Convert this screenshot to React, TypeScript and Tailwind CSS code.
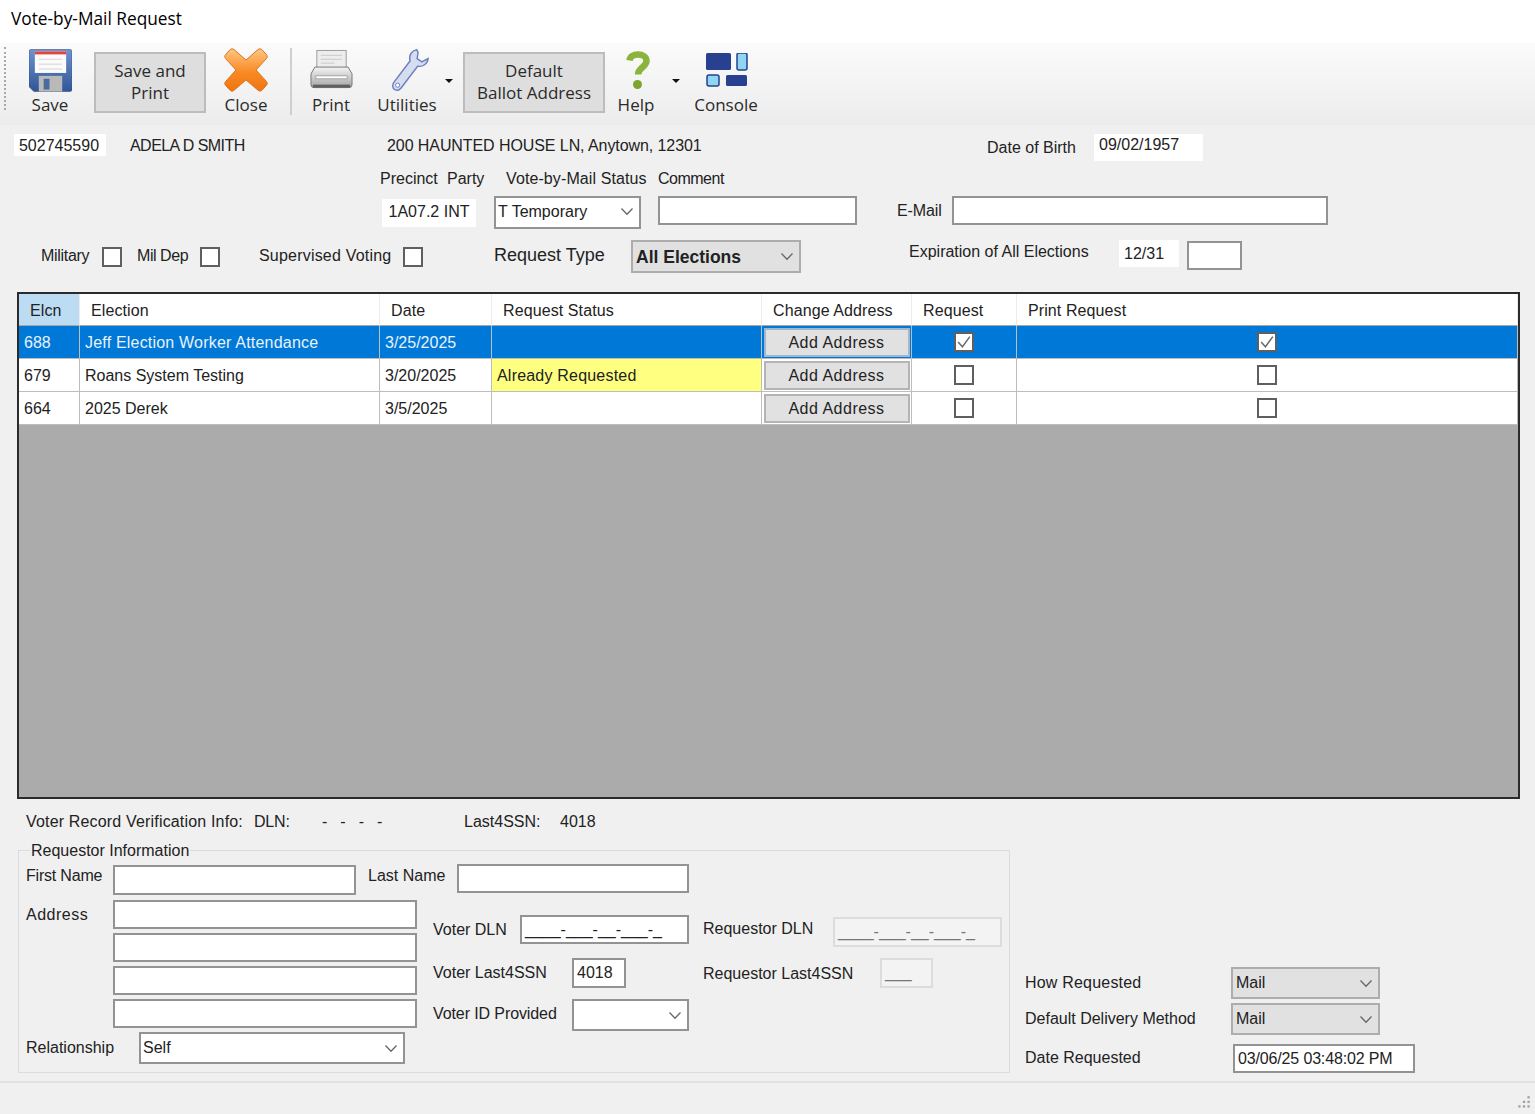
import React from "react";

const ui = "font-['Liberation_Sans',Arial,sans-serif] text-[16px] leading-[18px] text-[#222]";
const seg = "font-['Open_Sans','Noto_Sans',sans-serif] text-[17px] leading-[22px] text-[#2a2a2a]";

function Chevron({ color = "#666" }: { color?: string }) {
  return (
    <svg width="14" height="9" viewBox="0 0 14 9" fill="none">
      <path d="M1.5 1.5 7 7.2l5.5-5.7" stroke={color} strokeWidth="1.3" />
    </svg>
  );
}

function Input({ className = "", value = "", muted = false }: { className?: string; value?: string; muted?: boolean }) {
  return (
    <div className={`flex shrink-0 items-center overflow-hidden whitespace-nowrap border-2 px-[3px] ${muted ? "border-[#dcdcdc] bg-[#f3f3f3] text-[#777]" : "border-[#939393] bg-white"} ${className}`}>
      {value}
    </div>
  );
}

function Select({ className = "", value = "", gray = false, bold = false }: { className?: string; value?: string; gray?: boolean; bold?: boolean }) {
  return (
    <div className={`flex shrink-0 items-center justify-between border-2 pr-[5px] ${gray ? "border-[#adadad] bg-[#e1e1e1] pl-[3px]" : "border-[#939393] bg-white pl-[2px]"} ${bold ? "text-[17.5px] font-bold" : ""} ${className}`}>
      <span>{value}</span>
      <Chevron />
    </div>
  );
}

function Check({ checked = false, className = "" }: { checked?: boolean; className?: string }) {
  return (
    <div className={`flex h-[20px] w-[20px] shrink-0 items-center justify-center border-2 border-[#5f5f5f] bg-white ${className}`}>
      {checked && (
        <svg width="16" height="16" viewBox="0 0 15 15" fill="none">
          <path d="M2 7.5 6 12 13 2.5" stroke="#6a6a6a" strokeWidth="1.4" />
        </svg>
      )}
    </div>
  );
}

function Floppy() {
  return (
    <svg width="43" height="43" viewBox="0 0 44 43">
      <defs>
        <linearGradient id="fl" x1="0" y1="0" x2="0" y2="1">
          <stop offset="0" stopColor="#6f93cf" />
          <stop offset="1" stopColor="#2f5597" />
        </linearGradient>
      </defs>
      <path d="M2 0h40a2 2 0 0 1 2 2v39a2 2 0 0 1-2 2H5l-5-5V2a2 2 0 0 1 2-2z" fill="url(#fl)" stroke="#37527f" strokeWidth=".6" />
      <rect x="6" y="2" width="32" height="22" fill="#fbfbfb" />
      <rect x="6" y="2" width="32" height="3" fill="#e2463a" />
      <path d="M10 10h24M10 15h24M10 20h24" stroke="#d3d3d3" />
      <rect x="10" y="27" width="24" height="16" fill="#b9b9b9" />
      <rect x="15" y="30" width="6" height="11" fill="#4d6a9c" />
    </svg>
  );
}

function CloseX() {
  return (
    <svg width="44" height="44" viewBox="0 0 44 44">
      <defs>
        <linearGradient id="cx" x1="0" y1="0" x2="0" y2="1">
          <stop offset="0" stopColor="#ffc682" />
          <stop offset=".55" stopColor="#f98a24" />
          <stop offset="1" stopColor="#ee7412" />
        </linearGradient>
      </defs>
      <path d="M10 1.5 22 12 34 1.5c1.500-1 3-.8 4 .2l4.500 5c1 1.200 1 2.800 0 3.800L32 22l10.500 11.500c1 1.100 1 2.600 0 3.700l-4.500 5c-1 1-2.600 1.200-3.800.2L22 32 9.800 42.500c-1.200 1-2.800.8-3.800-.2l-4.500-5c-1-1.100-1-2.600 0-3.700L12 22 1.500 10.500c-1-1-1-2.700 0-3.800l4.500-5c1-1 2.700-1.200 4-.2z" fill="url(#cx)" stroke="#d9781f" strokeWidth="1" />
    </svg>
  );
}

function Printer() {
  return (
    <svg width="43" height="42" viewBox="0 0 44 42">
      <defs>
        <linearGradient id="pr" x1="0" y1="0" x2="0" y2="1">
          <stop offset="0" stopColor="#f4f4f4" />
          <stop offset="1" stopColor="#a4a4a4" />
        </linearGradient>
      </defs>
      <rect x="7" y="1" width="30" height="22" fill="#ededed" stroke="#9a9a9a" />
      <path d="M11 6h22M11 10h22M11 14h14" stroke="#c9c9c9" />
      <path d="M5 18h34l4 7v11a3 3 0 0 1-3 3H4a3 3 0 0 1-3-3V25z" fill="url(#pr)" stroke="#777" />
      <rect x="6" y="27" width="32" height="3" fill="#fff" stroke="#8d8d8d" strokeWidth=".7" />
      <rect x="3" y="36" width="38" height="3" fill="#5f5f5f" />
    </svg>
  );
}

function Wrench() {
  return (
    <svg width="38" height="46" viewBox="0 0 40 46">
      <path d="M27 1.500c-5 1-8.500 6-7 12L3 36c-2 3-1.500 6 .8 7.500 2.400 1.500 5 .8 6.800-1.500l17.400-23c5.500 1 10.500-2.500 11-8l-6.500 3.500-5-3.500 1-6.500c-.3-.5-.8-1.500-1.500-3z" fill="#d5ddf0" stroke="#6d7fbe" strokeWidth="1.500" />
      <circle cx="7" cy="39" r="2.200" fill="#fff" stroke="#6d7fbe" />
    </svg>
  );
}

function HelpMark() {
  return (
    <svg width="24" height="38" viewBox="0 0 24 38" fill="none">
      <path d="M3.500 9.500C4 5.500 7.500 3.500 12 3.500c5 0 8.500 2.700 8.500 6.500 0 6-8.500 6.500-8.500 13.500" stroke="#8ab43c" strokeWidth="6.500" />
      <circle cx="11.500" cy="33.500" r="4.500" fill="#7ba52f" />
    </svg>
  );
}

function ConsoleIcon() {
  return (
    <svg width="42" height="34" viewBox="0 0 42 34">
      <rect x="0" y="0" width="25" height="17" rx="1.500" fill="#27408f" />
      <rect x="31" y="0" width="10" height="17" rx="2" fill="#8fd6f2" stroke="#27408f" strokeWidth="1.500" />
      <rect x="1" y="22" width="12" height="11" rx="2" fill="#8fd6f2" stroke="#27408f" strokeWidth="1.500" />
      <rect x="20" y="22" width="21" height="11" rx="1.500" fill="#27408f" />
    </svg>
  );
}

function Tool({ label, icon, className = "" }: { label: string; icon: React.ReactNode; className?: string }) {
  return (
    <div className={`mt-[3px] flex shrink-0 flex-col items-center ${className}`}>
      <div className="flex h-[48px] items-center justify-center">{icon}</div>
      <div className={`${seg} h-[22px] whitespace-nowrap`}>{label}</div>
    </div>
  );
}

function TextButton({ lines, className = "" }: { lines: string[]; className?: string }) {
  return (
    <div className={`${seg} mt-[9px] flex h-[61px] shrink-0 flex-col items-center justify-center border-2 border-[#bcbcbc] bg-[#dedede] pb-[2px] ${className}`}>
      {lines.map((l) => (
        <div key={l}>{l}</div>
      ))}
    </div>
  );
}

function Caret({ className = "" }: { className?: string }) {
  return <div className={`h-0 w-0 shrink-0 border-x-[4px] border-t-[4px] border-x-transparent border-t-[#111] ${className}`} />;
}

const cell = "flex items-center overflow-hidden whitespace-nowrap border-r border-b border-[#bdbdbd]";

const elections = [
  { id: "688", name: "Jeff Election Worker Attendance", date: "3/25/2025", status: "", on: true },
  { id: "679", name: "Roans System Testing", date: "3/20/2025", status: "Already Requested", on: false },
  { id: "664", name: "2025 Derek", date: "3/5/2025", status: "", on: false },
];

const headers = ["Elcn", "Election", "Date", "Request Status", "Change Address", "Request", "Print Request"];

function ElectionGrid() {
  return (
    <div className="ml-[17px] mt-[19px] h-[507px] w-[1503px] border-2 border-[#2b2b2b] bg-[#ababab]">
      <div className="grid grid-cols-[61px_300px_112px_270px_150px_105px_1fr] grid-rows-[32px_33px_33px_33px]">
        {headers.map((h, i) => (
          <div key={h} className={`flex items-center whitespace-nowrap border-r border-b border-r-[#ececec] border-b-[#a8a8a8] pl-[11px] pt-[2px] tracking-[.1px] ${i === 0 ? "bg-[#bcdcf4]" : "bg-white"}`}>
            {h}
          </div>
        ))}
        {elections.map((e) => {
          const tone = e.on ? "bg-[#0078d7] text-[#e8f2fb]" : "bg-white";
          return (
            <React.Fragment key={e.id}>
              <div className={`${cell} ${tone} pl-[5px] pt-[2px]`}>{e.id}</div>
              <div className={`${cell} ${tone} pl-[5px] pt-[2px] ${e.on ? "tracking-[.2px]" : ""}`}>{e.name}</div>
              <div className={`${cell} ${tone} pl-[5px] pt-[2px]`}>{e.date}</div>
              <div className={`${cell} pl-[5px] pt-[2px] tracking-[.2px] ${e.status ? "bg-[#ffff80]" : tone}`}>{e.status}</div>
              <div className={`${cell} ${tone} justify-center`}>
                <div className={`flex h-[29px] w-[146px] items-center justify-center border-2 bg-[#e1e1e1] pt-[2px] tracking-[.5px] text-[#222] ${e.on ? "border-[#9db8d0]" : "border-[#b4b4b4]"}`}>Add Address</div>
              </div>
              <div className={`${cell} ${tone} justify-center`}>
                <Check checked={e.on} />
              </div>
              <div className={`${cell} ${tone} justify-center`}>
                <Check checked={e.on} />
              </div>
            </React.Fragment>
          );
        })}
      </div>
    </div>
  );
}

function RequestorBox() {
  return (
    <fieldset className="h-[232px] w-[992px] shrink-0 border border-[#dcdcdc]">
      <legend className="ml-[11px] px-[1px] pt-[1px]">Requestor Information</legend>
      <div className="ml-[7px] mt-[5px] flex h-[30px] items-start">
        <div className="mt-[2px] w-[87px] tracking-[-.2px]">First Name</div>
        <Input className="h-[30px] w-[243px]" />
        <div className="ml-[12px] mt-[2px] w-[89px]">Last Name</div>
        <Input className="-mt-[1px] h-[29px] w-[232px]" />
      </div>
      <div className="ml-[7px] mt-[5px] flex items-start">
        <div className="w-[391px] shrink-0">
          <div className="flex items-start">
            <div className="mt-[6px] w-[87px] tracking-[.5px]">Address</div>
            <div className="flex flex-col gap-[4px]">
              <Input className="h-[29px] w-[304px]" />
              <Input className="h-[29px] w-[304px]" />
              <Input className="h-[29px] w-[304px]" />
              <Input className="h-[29px] w-[304px]" />
            </div>
          </div>
          <div className="mt-[4px] flex items-center">
            <div className="w-[113px]">Relationship</div>
            <Select className="h-[32px] w-[266px]" value="Self" />
          </div>
        </div>
        <div className="ml-[16px] w-[256px] shrink-0 pt-[15px]">
          <div className="flex items-center">
            <div className="w-[87px]">Voter DLN</div>
            <Input className="h-[29px] w-[169px] justify-start" value="____-___-__-___-_" />
          </div>
          <div className="mt-[14px] flex items-center">
            <div className="w-[139px]">Voter Last4SSN</div>
            <Input className="h-[30px] w-[54px]" value="4018" />
          </div>
          <div className="mt-[11px] flex items-start">
            <div className="mt-[6px] w-[139px] tracking-[-.1px]">Voter ID Provided</div>
            <Select className="h-[32px] w-[117px]" />
          </div>
        </div>
        <div className="ml-[14px] pt-[17px]">
          <div className="flex items-start">
            <div className="mt-[3px] w-[130px]">Requestor DLN</div>
            <Input muted className="h-[30px] w-[169px]" value="____-___-__-___-_" />
          </div>
          <div className="mt-[11px] flex items-start">
            <div className="mt-[7px] w-[177px]">Requestor Last4SSN</div>
            <Input muted className="h-[30px] w-[53px]" value="___" />
          </div>
        </div>
      </div>
    </fieldset>
  );
}

export default function App() {
  return (
    <div className={`${ui} flex h-[1114px] w-[1535px] flex-col overflow-hidden bg-[#f0f0f0]`}>
      {/* title */}
      <div className="flex h-[43px] shrink-0 items-start bg-white pl-[11px] pt-[8px]">
        <span className="font-['Open_Sans',sans-serif] text-[17.3px] leading-[22px] text-black">Vote-by-Mail Request</span>
      </div>

      {/* toolbar */}
      <div className="flex h-[82px] shrink-0 items-start bg-gradient-to-b from-[#fbfbfb] to-[#ececec] pl-[4px]">
        <div className="mt-[4px] h-[63px] w-[3px] shrink-0 border-l-2 border-dotted border-[#a8a8a8]" />
        <Tool className="ml-[13px] w-[60px]" label="Save" icon={<Floppy />} />
        <TextButton className="ml-[14px] w-[112px]" lines={["Save and", "Print"]} />
        <Tool className="ml-[10px] w-[60px]" label="Close" icon={<CloseX />} />
        <div className="ml-[14px] mt-[5px] h-[67px] w-[2px] shrink-0 bg-[#cfcfcf]" />
        <Tool className="ml-[9px] w-[60px]" label="Print" icon={<Printer />} />
        <Tool className="ml-[16px] w-[60px]" label="Utilities" icon={<div className="ml-[6px]"><Wrench /></div>} />
        <Caret className="ml-[8px] mt-[36px]" />
        <TextButton className="ml-[10px] w-[142px]" lines={["Default", "Ballot Address"]} />
        <Tool className="ml-[12px] w-[38px]" label="Help" icon={<div className="ml-[3px]"><HelpMark /></div>} />
        <Caret className="ml-[17px] mt-[36px]" />
        <Tool className="ml-[14px] w-[64px]" label="Console" icon={<div className="ml-[2px]"><ConsoleIcon /></div>} />
      </div>

      {/* voter header */}
      <div className="mt-[9px] flex h-[27px] shrink-0 items-start">
        <div className="ml-[14px] flex h-[22px] w-[92px] items-center justify-center bg-white pr-[2px] pt-[1px]">502745590</div>
        <div className="ml-[24px] mt-[3px] w-[257px] tracking-[-.55px]">ADELA D SMITH</div>
        <div className="mt-[3px] w-[600px] tracking-[-.08px]">200 HAUNTED HOUSE LN, Anytown, 12301</div>
        <div className="mt-[5px] w-[107px]">Date of Birth</div>
        <div className="h-[27px] w-[109px] bg-white pl-[5px] pt-[2px]">09/02/1957</div>
      </div>

      <div className="ml-[380px] mt-[9px] flex h-[17px] shrink-0">
        <div className="w-[67px]">Precinct</div>
        <div className="w-[59px]">Party</div>
        <div className="w-[152px] tracking-[.1px]">Vote-by-Mail Status</div>
        <div className="tracking-[-.5px]">Comment</div>
      </div>

      <div className="mt-[9px] flex h-[33px] shrink-0 items-start">
        <div className="ml-[382px] mt-[3px] flex h-[28px] w-[94px] items-center justify-center bg-white pb-[2px]">1A07.2 INT</div>
        <Select className="ml-[18px] h-[33px] w-[147px] pb-[2px]" value="T Temporary" />
        <Input className="ml-[17px] h-[29px] w-[199px]" />
        <div className="ml-[40px] flex h-[29px] w-[55px] items-center pt-[1px] tracking-[-.1px]">E-Mail</div>
        <Input className="h-[29px] w-[376px]" />
      </div>

      <div className="mt-[11px] flex h-[33px] shrink-0 items-start">
        <div className="ml-[41px] mt-[7px] w-[61px] tracking-[-.3px]">Military</div>
        <Check className="mt-[7px]" />
        <div className="ml-[15px] mt-[7px] w-[63px] tracking-[-.45px]">Mil Dep</div>
        <Check className="mt-[7px]" />
        <div className="ml-[39px] mt-[7px] w-[144px] tracking-[.2px]">Supervised Voting</div>
        <Check className="mt-[7px]" />
        <div className="ml-[71px] mt-[6px] w-[137px] text-[18px]">Request Type</div>
        <Select gray bold className="h-[33px] w-[170px]" value="All Elections" />
        <div className="ml-[108px] mt-[3px] w-[210px]">Expiration of All Elections</div>
        <div className="flex h-[27px] w-[60px] items-center bg-white pl-[5px]">12/31</div>
        <Input className="ml-[8px] mt-[1px] h-[29px] w-[55px]" />
      </div>

      <ElectionGrid />

      <div className="ml-[26px] mt-[14px] flex h-[18px] shrink-0">
        <div className="w-[228px] tracking-[.17px]">Voter Record Verification Info:</div>
        <div className="w-[68px] tracking-[-.2px]">DLN:</div>
        <div className="w-[142px] tracking-[13px]">----</div>
        <div className="w-[96px]">Last4SSN:</div>
        <div>4018</div>
      </div>

      <div className="ml-[18px] mt-[10px] flex shrink-0 items-start">
        <RequestorBox />
        <div className="ml-[15px] mt-[126px] w-[400px] shrink-0">
          <div className="flex items-center">
            <div className="w-[206px] tracking-[.2px]">How Requested</div>
            <Select gray className="h-[32px] w-[149px]" value="Mail" />
          </div>
          <div className="mt-[4px] flex items-center">
            <div className="w-[206px]">Default Delivery Method</div>
            <Select gray className="h-[32px] w-[149px]" value="Mail" />
          </div>
          <div className="mt-[9px] flex items-start">
            <div className="mt-[5px] w-[208px]">Date Requested</div>
            <Input className="h-[29px] w-[182px] tracking-[-.15px]" value="03/06/25 03:48:02 PM" />
          </div>
        </div>
      </div>

      {/* status bar */}
      <div className="mt-[8px] flex flex-1 items-end justify-end border-t-2 border-[#e2e2e2] pb-[3px] pr-[3px]">
        <svg width="16" height="16" viewBox="0 0 14 14" fill="#a0a0a0">
          <rect x="10" y="1" width="2" height="2" />
          <rect x="6" y="5" width="2" height="2" />
          <rect x="10" y="5" width="2" height="2" />
          <rect x="2" y="9" width="2" height="2" />
          <rect x="6" y="9" width="2" height="2" />
          <rect x="10" y="9" width="2" height="2" />
        </svg>
      </div>
    </div>
  );
}
